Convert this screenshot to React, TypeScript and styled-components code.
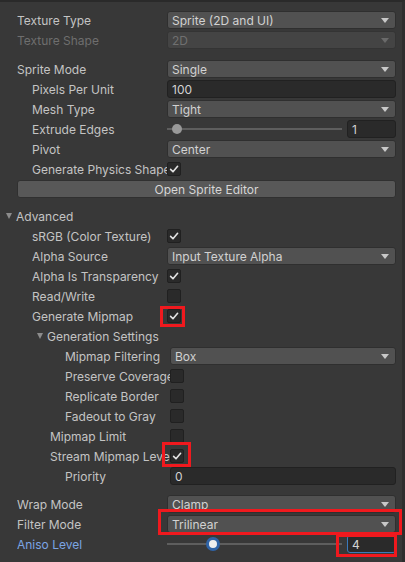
import styled, { createGlobalStyle } from 'styled-components';

const GlobalStyle = createGlobalStyle`
  html, body {
    margin: 0;
    padding: 0;
    background: #383838;
  }

  body {
    font-family: Inter, "Noto Sans", sans-serif;
    font-size: 12px;
    color: #c4c4c4;
  }
`;

type Tone = 'normal' | 'disabled' | 'accent';

const toneColor = (tone?: Tone) =>
  tone === 'disabled' ? '#6e6e6e' : tone === 'accent' ? '#7ba5e4' : '#c4c4c4';

function Arrow({ disabled }: { disabled?: boolean }) {
  return <Caret $disabled={disabled} />;
}

function CheckBox({ checked }: { checked?: boolean }) {
  return (
    <Box>
      {checked && (
        <svg width="10" height="10" viewBox="0 0 10 10">
          <path d="M1.6 5.4 L4 7.8 L8.6 2.3" fill="none" stroke="#e4e4e4" strokeWidth="1.6" strokeLinecap="round" strokeLinejoin="round" />
        </svg>
      )}
    </Box>
  );
}

function Dropdown({ value, disabled }: { value: string; disabled?: boolean }) {
  return (
    <Select $disabled={disabled}>
      <span>{value}</span>
      <Arrow disabled={disabled} />
    </Select>
  );
}

function Slider({ value, max, active, highlightField }: { value: number; max: number; active?: boolean; highlightField?: boolean }) {
  const ratio = value / max;
  const field = (
    <IntField $focused={active}>{value}</IntField>
  );
  return (
    <SliderWrap>
      <Track>
        <Thumb $active={active} style={{ left: `calc(5px + (100% - 10px) * ${ratio})` }} />
      </Track>
      {highlightField ? (
        <Highlight $t={1} $r={1} $b={4} $l={11}>{field}</Highlight>
      ) : field}
    </SliderWrap>
  );
}

export default function App() {
  return (
    <>
      <GlobalStyle />
      <Panel>
        <Row>
          <Label>Texture Type</Label>
          <Dropdown value="Sprite (2D and UI)" />
        </Row>
        <Row>
          <Label $tone="disabled">Texture Shape</Label>
          <Dropdown value="2D" disabled />
        </Row>

        <Section $gap={9}>
          <Row>
            <Label>Sprite Mode</Label>
            <Dropdown value="Single" />
          </Row>
          <Row>
            <Label $indent={15}>Pixels Per Unit</Label>
            <TextField>100</TextField>
          </Row>
          <Row>
            <Label $indent={15}>Mesh Type</Label>
            <Dropdown value="Tight" />
          </Row>
          <Row>
            <Label $indent={15}>Extrude Edges</Label>
            <Slider value={1} max={32} />
          </Row>
          <Row>
            <Label $indent={15}>Pivot</Label>
            <Dropdown value="Center" />
          </Row>
          <Row>
            <Label $indent={15}>Generate Physics Shape</Label>
            <CheckBox checked />
          </Row>
          <Button>Open Sprite Editor</Button>
        </Section>

        <Section $gap={7}>
          <Foldout>
            <FoldArrow />
            Advanced
          </Foldout>
          <Row>
            <Label $indent={15}>sRGB (Color Texture)</Label>
            <CheckBox checked />
          </Row>
          <Row>
            <Label $indent={15}>Alpha Source</Label>
            <Dropdown value="Input Texture Alpha" />
          </Row>
          <Row>
            <Label $indent={15}>Alpha Is Transparency</Label>
            <CheckBox checked />
          </Row>
          <Row>
            <Label $indent={15}>Read/Write</Label>
            <CheckBox />
          </Row>
          <Row>
            <Label $indent={15}>Generate Mipmap</Label>
            <Highlight $t={3} $r={4} $b={4} $l={7}>
              <CheckBox checked />
            </Highlight>
          </Row>
          <Foldout $indent={31}>
            <FoldArrow />
            Generation Settings
          </Foldout>
          <Row $shift={3}>
            <Label $indent={48}>Mipmap Filtering</Label>
            <Dropdown value="Box" />
          </Row>
          <Row $shift={3}>
            <Label $indent={48}>Preserve Coverage</Label>
            <CheckBox />
          </Row>
          <Row $shift={3}>
            <Label $indent={48}>Replicate Border</Label>
            <CheckBox />
          </Row>
          <Row $shift={3}>
            <Label $indent={48}>Fadeout to Gray</Label>
            <CheckBox />
          </Row>
          <Row $shift={3}>
            <Label $indent={33}>Mipmap Limit</Label>
            <CheckBox />
          </Row>
          <Row $shift={3}>
            <Label $indent={33}>Stream Mipmap Levels</Label>
            <Highlight $t={7} $r={7} $b={4} $l={8}>
              <CheckBox checked />
            </Highlight>
          </Row>
          <Row $shift={3}>
            <Label $indent={48}>Priority</Label>
            <TextField>0</TextField>
          </Row>
        </Section>

        <Section $gap={8}>
          <Row>
            <Label>Wrap Mode</Label>
            <Dropdown value="Clamp" />
          </Row>
          <Row>
            <Label>Filter Mode</Label>
            <Highlight $fill $t={6} $r={6} $b={2} $l={9}>
              <Dropdown value="Trilinear" />
            </Highlight>
          </Row>
          <Row>
            <Label $tone="accent">Aniso Level</Label>
            <Slider value={4} max={16} active highlightField />
          </Row>
        </Section>
      </Panel>
    </>
  );
}

const Panel = styled.div`
  width: 405px;
  height: 562px;
  box-sizing: border-box;
  display: flex;
  flex-direction: column;
  padding: 8px 6px 0 17px;
  border-top: 2px solid #2a2a2a;
  border-right: 3px solid #2e2e2e;
  overflow: hidden;
`;

const Section = styled.div<{ $gap: number }>`
  display: flex;
  flex-direction: column;
  margin-top: ${({ $gap }) => $gap}px;
`;

const Row = styled.div<{ $shift?: number }>`
  display: grid;
  grid-template-columns: ${({ $shift }) => 150 + ($shift ?? 0)}px 1fr;
  align-items: center;
  justify-items: start;
  height: 20px;

  & > * {
    justify-self: stretch;
  }
`;

const Label = styled.span<{ $indent?: number; $tone?: Tone }>`
  padding-left: ${({ $indent }) => $indent ?? 0}px;
  color: ${({ $tone }) => toneColor($tone)};
  white-space: nowrap;
  overflow: hidden;
`;

const Select = styled.div<{ $disabled?: boolean }>`
  height: 18px;
  box-sizing: border-box;
  display: flex;
  align-items: center;
  justify-content: space-between;
  padding: 0 6px 0 4px;
  border: 1px solid ${({ $disabled }) => ($disabled ? '#343434' : '#2f2f2f')};
  border-radius: 3px;
  background: ${({ $disabled }) => ($disabled ? '#444444' : '#515151')};
  color: ${({ $disabled }) => ($disabled ? '#707070' : '#d2d2d2')};
`;

const Caret = styled.span<{ $disabled?: boolean }>`
  width: 0;
  height: 0;
  border-left: 4px solid transparent;
  border-right: 4px solid transparent;
  border-top: 5px solid ${({ $disabled }) => ($disabled ? '#6a6a6a' : '#c8c8c8')};
`;

const TextField = styled.div`
  height: 18px;
  box-sizing: border-box;
  display: flex;
  align-items: center;
  padding: 0 4px;
  border: 1px solid #212121;
  border-radius: 3px;
  background: #2a2a2a;
  color: #d2d2d2;
`;

const IntField = styled(TextField)<{ $focused?: boolean }>`
  width: 49px;
  border-color: ${({ $focused }) => ($focused ? '#3a79bb' : '#212121')};
`;

const SliderWrap = styled.div`
  display: flex;
  align-items: center;
  gap: 5px;
`;

const Track = styled.div`
  position: relative;
  flex: 1;
  height: 2px;
  background: #5e5e5e;
`;

const Thumb = styled.span<{ $active?: boolean }>`
  position: absolute;
  top: 50%;
  width: ${({ $active }) => ($active ? 14 : 10)}px;
  height: ${({ $active }) => ($active ? 14 : 10)}px;
  box-sizing: border-box;
  border-radius: 50%;
  transform: translate(-50%, -50%);
  background: ${({ $active }) => ($active ? '#eeeeee' : '#999999')};
  border: ${({ $active }) => ($active ? '3px solid #2f63a6' : 'none')};
`;

const Box = styled.span`
  width: 14px;
  height: 14px;
  box-sizing: border-box;
  display: flex;
  align-items: center;
  justify-content: center;
  border: 1px solid #202020;
  border-radius: 2px;
  background: #2a2a2a;
`;

const Row_ = Row;

const Highlight = styled.span<{ $fill?: boolean; $t: number; $r: number; $b: number; $l: number }>`
  position: relative;
  display: flex;

  ${Row_} > & {
    justify-self: ${({ $fill }) => ($fill ? 'stretch' : 'start')};
  }

  & > * {
    flex: ${({ $fill }) => ($fill ? 1 : 'none')};
  }

  &::after {
    content: '';
    position: absolute;
    top: -${({ $t }) => $t}px;
    right: -${({ $r }) => $r}px;
    bottom: -${({ $b }) => $b}px;
    left: -${({ $l }) => $l}px;
    border: 3px solid #f0191e;
    pointer-events: none;
  }
`;

const Button = styled.div`
  height: 18px;
  box-sizing: border-box;
  margin: 1px 0;
  display: flex;
  align-items: center;
  justify-content: center;
  border: 1px solid #303030;
  border-radius: 3px;
  background: #585858;
  color: #d6d6d6;
`;

const Foldout = styled.div<{ $indent?: number }>`
  display: flex;
  align-items: center;
  gap: 4px;
  height: 20px;
  margin-left: ${({ $indent }) => ($indent ?? 0) - 11}px;
  color: #c4c4c4;
`;

const FoldArrow = styled.span`
  width: 0;
  height: 0;
  border-left: 3.5px solid transparent;
  border-right: 3.5px solid transparent;
  border-top: 6px solid #8c8c8c;
`;
